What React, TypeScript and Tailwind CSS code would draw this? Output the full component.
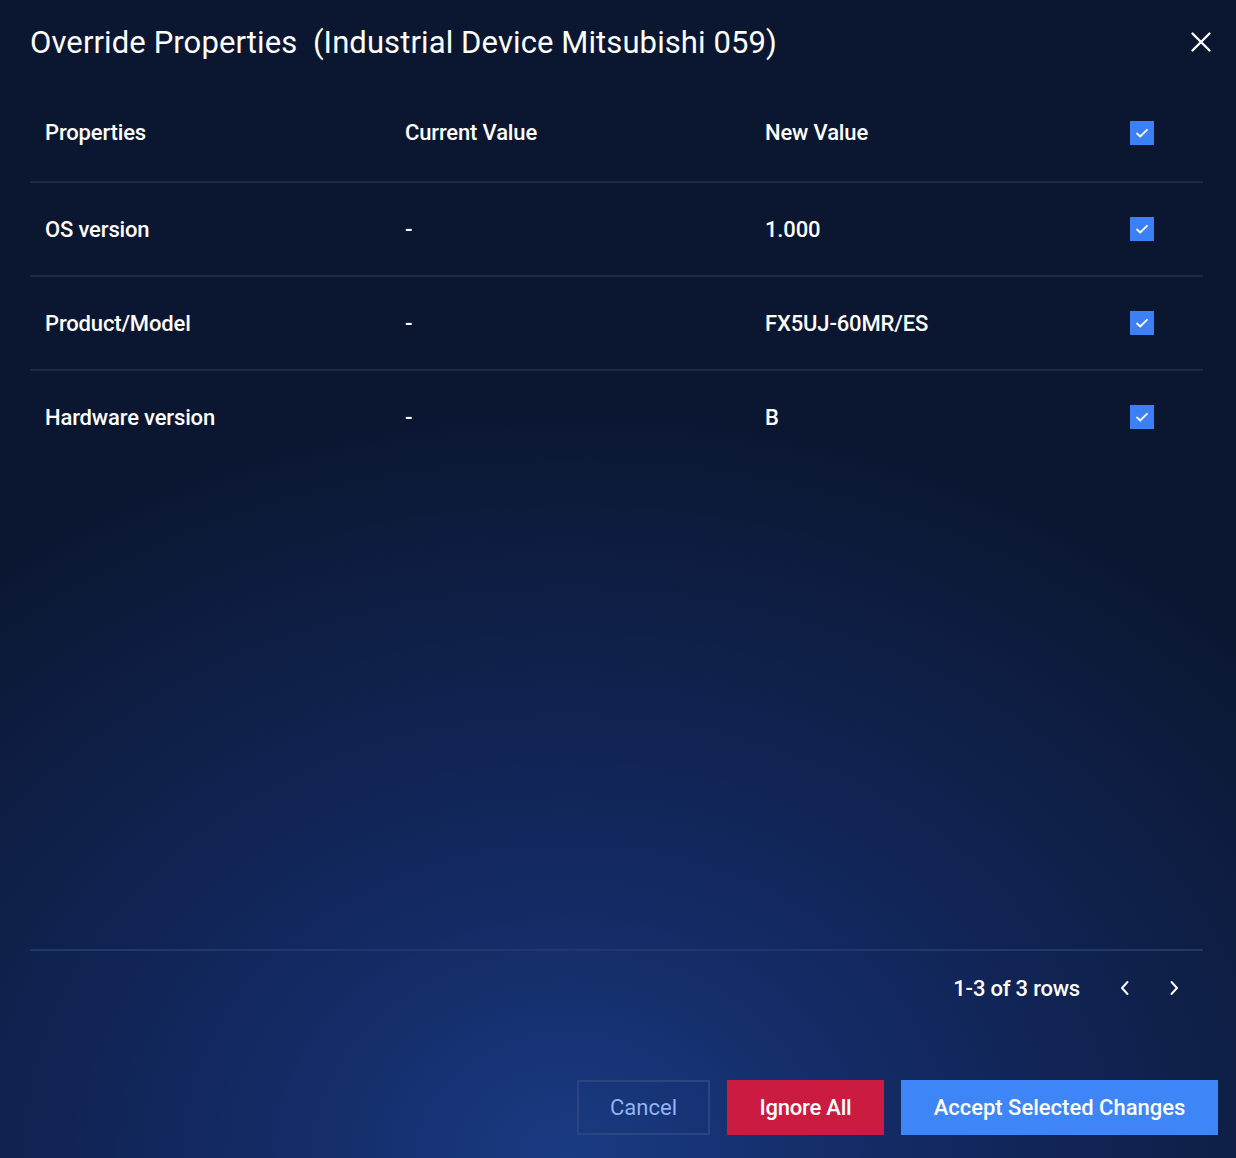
import React from "react";

const rows = [
  { name: "OS version", current: "-", next: "1.000" },
  { name: "Product/Model", current: "-", next: "FX5UJ-60MR/ES" },
  { name: "Hardware version", current: "-", next: "B" },
];

function Check() {
  return (
    <div className="w-6 h-6 bg-[#3d80f5] flex items-center justify-center">
      <svg width="16" height="16" viewBox="0 0 16 16" fill="none">
        <path d="M3 8.5l3.2 3L13 4.8" stroke="white" strokeWidth="1.8" strokeLinecap="round" strokeLinejoin="round" />
      </svg>
    </div>
  );
}

function Row({ a, b, c, tall }: { a: string; b: string; c: string; tall?: boolean }) {
  return (
    <div
      className={
        "grid grid-cols-[360px_360px_365px_1fr] items-center px-[15px] " +
        (tall ? "h-[97px]" : "h-[92px]")
      }
    >
      <div className="text-[22px] font-medium text-white tracking-[-0.15px]">{a}</div>
      <div className="text-[22px] font-medium text-white tracking-[-0.15px]">{b}</div>
      <div className="text-[22px] font-medium text-white tracking-[-0.15px]">{c}</div>
      <div><Check /></div>
    </div>
  );
}

export default function App() {
  return (
    <div
      className="w-[1236px] h-[1158px] flex flex-col bg-[#0b1731] bg-[radial-gradient(ellipse_75%_65%_at_46%_100%,#1a3a82_0%,#12285f_40%,#0b1731_100%)] text-white overflow-hidden"
      style={{ fontFamily: "Roboto, 'Noto Sans', sans-serif" }}
    >
      <div className="flex items-center justify-between pl-[30px] pr-[24px] h-[84px]">
        <div className="text-[31px] tracking-[0.1px] text-white leading-none">
          Override Properties&nbsp;&nbsp;(Industrial Device Mitsubishi 059)
        </div>
        <svg width="22" height="22" viewBox="0 0 22 22" fill="none">
          <path d="M2.5 2.5l17 17M19.5 2.5l-17 17" stroke="white" strokeWidth="2.3" strokeLinecap="round" />
        </svg>
      </div>

      <div className="ml-[30px] mr-[33px]">
        <Row a="Properties" b="Current Value" c="New Value" tall />
        {rows.map((r) => (
          <div key={r.name}>
            <div className="h-[2px] bg-[#1c2a48]" />
            <Row a={r.name} b={r.current} c={r.next} />
          </div>
        ))}
      </div>

      <div className="flex-1" />

      <div className="ml-[30px] mr-[33px] h-[2px] bg-[#22376a]" />

      <div className="flex items-center justify-end h-[74px] pr-[52px]">
        <span className="text-[22px] font-medium tracking-[-0.2px] mr-[35px]">1-3 of 3 rows</span>
        <svg width="20" height="20" viewBox="0 0 20 20" fill="none" className="mr-[29px]">
          <path d="M12.5 4L7 10l5.5 6" stroke="white" strokeWidth="2" strokeLinecap="round" strokeLinejoin="round" />
        </svg>
        <svg width="20" height="20" viewBox="0 0 20 20" fill="none">
          <path d="M7.5 4L13 10l-5.5 6" stroke="white" strokeWidth="2" strokeLinecap="round" strokeLinejoin="round" />
        </svg>
      </div>

      <div className="flex justify-end items-center gap-[17px] pr-[18px] mt-[55px] mb-[23px]">
        <button className="h-[55px] w-[133px] border-2 border-[#2a4580] bg-transparent text-[#93b3f5] text-[22px]">
          Cancel
        </button>
        <button className="h-[55px] w-[157px] bg-[#cc1b40] text-white text-[22px] font-medium tracking-[-0.2px]">
          Ignore All
        </button>
        <button className="h-[55px] w-[317px] bg-[#3e86f8] text-white text-[22px] font-medium">
          Accept Selected Changes
        </button>
      </div>
    </div>
  );
}
